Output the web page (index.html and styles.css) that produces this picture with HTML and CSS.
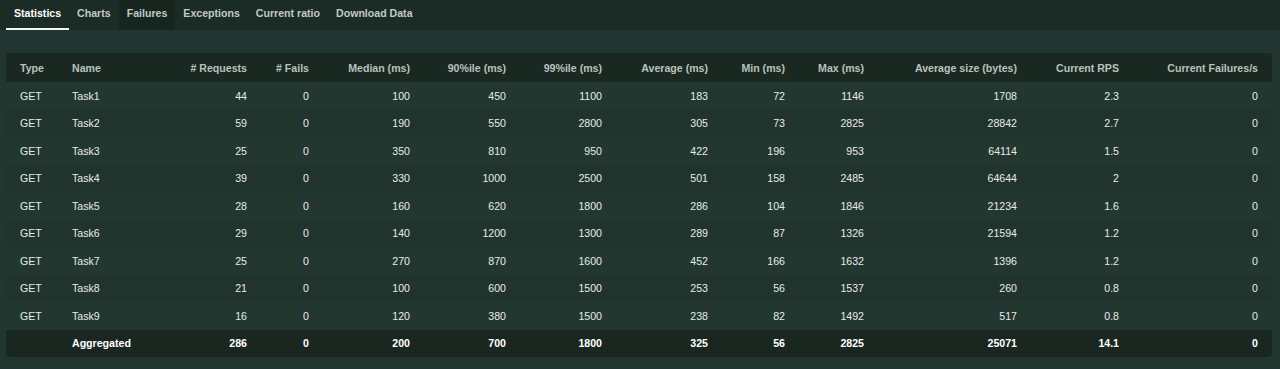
FILE: index.html
```html
<!DOCTYPE html>
<html>
<head>
<meta charset="utf-8">
<link rel="stylesheet" href="styles.css">
</head>
<body>
<nav class="tabs">
  <div class="tab active">Statistics</div>
  <div class="tab">Charts</div>
  <div class="tab hover">Failures</div>
  <div class="tab">Exceptions</div>
  <div class="tab">Current ratio</div>
  <div class="tab">Download Data</div>
</nav>
<main class="content">
  <div class="paper">
    <table class="stats">
      <colgroup>
        <col class="c-type"><col class="c-name"><col class="c-req"><col class="c-fails"><col class="c-med"><col class="c-p90"><col class="c-p99"><col class="c-avg"><col class="c-min"><col class="c-max"><col class="c-size"><col class="c-rps"><col class="c-fps">
      </colgroup>
      <thead>
        <tr><th class="l">Type</th><th class="l">Name</th><th># Requests</th><th># Fails</th><th>Median (ms)</th><th>90%ile (ms)</th><th>99%ile (ms)</th><th>Average (ms)</th><th>Min (ms)</th><th>Max (ms)</th><th>Average size (bytes)</th><th>Current RPS</th><th>Current Failures/s</th></tr>
      </thead>
      <tbody>
        <tr><td class="l">GET</td><td class="l">Task1</td><td>44</td><td>0</td><td>100</td><td>450</td><td>1100</td><td>183</td><td>72</td><td>1146</td><td>1708</td><td>2.3</td><td>0</td></tr>
        <tr><td class="l">GET</td><td class="l">Task2</td><td>59</td><td>0</td><td>190</td><td>550</td><td>2800</td><td>305</td><td>73</td><td>2825</td><td>28842</td><td>2.7</td><td>0</td></tr>
        <tr><td class="l">GET</td><td class="l">Task3</td><td>25</td><td>0</td><td>350</td><td>810</td><td>950</td><td>422</td><td>196</td><td>953</td><td>64114</td><td>1.5</td><td>0</td></tr>
        <tr><td class="l">GET</td><td class="l">Task4</td><td>39</td><td>0</td><td>330</td><td>1000</td><td>2500</td><td>501</td><td>158</td><td>2485</td><td>64644</td><td>2</td><td>0</td></tr>
        <tr><td class="l">GET</td><td class="l">Task5</td><td>28</td><td>0</td><td>160</td><td>620</td><td>1800</td><td>286</td><td>104</td><td>1846</td><td>21234</td><td>1.6</td><td>0</td></tr>
        <tr><td class="l">GET</td><td class="l">Task6</td><td>29</td><td>0</td><td>140</td><td>1200</td><td>1300</td><td>289</td><td>87</td><td>1326</td><td>21594</td><td>1.2</td><td>0</td></tr>
        <tr><td class="l">GET</td><td class="l">Task7</td><td>25</td><td>0</td><td>270</td><td>870</td><td>1600</td><td>452</td><td>166</td><td>1632</td><td>1396</td><td>1.2</td><td>0</td></tr>
        <tr><td class="l">GET</td><td class="l">Task8</td><td>21</td><td>0</td><td>100</td><td>600</td><td>1500</td><td>253</td><td>56</td><td>1537</td><td>260</td><td>0.8</td><td>0</td></tr>
        <tr><td class="l">GET</td><td class="l">Task9</td><td>16</td><td>0</td><td>120</td><td>380</td><td>1500</td><td>238</td><td>82</td><td>1492</td><td>517</td><td>0.8</td><td>0</td></tr>
        <tr class="agg"><td class="l"></td><td class="l">Aggregated</td><td>286</td><td>0</td><td>200</td><td>700</td><td>1800</td><td>325</td><td>56</td><td>2825</td><td>25071</td><td>14.1</td><td>0</td></tr>
      </tbody>
    </table>
  </div>
</main>
</body>
</html>
```

FILE: styles.css
```css
html, body {
  margin: 0;
  padding: 0;
}
body {
  background: #213630;
  font-family: "Liberation Sans", Arial, Helvetica, sans-serif;
  font-size: 10.6px;
  color: #e8eae9;
  height: 369px;
  overflow: hidden;
}
.tabs {
  display: flex;
  height: 30px;
  padding-left: 6px;
  background: #1b2b25;
}
.tab {
  box-sizing: border-box;
  height: 30px;
  padding: 7px 8px 0;
  line-height: 12px;
  font-weight: bold;
  color: #c2cac6;
  border-bottom: 2px solid transparent;
}
.tab.active {
  color: #ffffff;
  border-bottom-color: #f4f6f5;
}
.tab.hover {
  background: #17251f;
}
.content {
  padding: 23px 8px 0 6px;
}
.paper {
  border-radius: 4px;
  overflow: hidden;
  background: #20342d;
}
.stats {
  width: 100%;
  border-collapse: collapse;
  table-layout: fixed;
}
.c-type { width: 52px; }
.c-name { width: 100px; }
.c-req { width: 103px; }
.c-fails { width: 62px; }
.c-med { width: 101px; }
.c-p90 { width: 96px; }
.c-p99 { width: 96px; }
.c-avg { width: 106px; }
.c-min { width: 77px; }
.c-max { width: 79px; }
.c-size { width: 153px; }
.c-rps { width: 102px; }
.c-fps { width: 139px; }
.stats th, .stats td {
  padding: 0 14px;
  text-align: right;
  white-space: nowrap;
  line-height: 12px;
}
.stats th.l, .stats td.l {
  text-align: left;
}
.stats thead tr {
  background: #1a2822;
  height: 29px;
}
.stats th {
  font-weight: bold;
  color: #b8c2bd;
}
.stats tbody tr {
  height: 27.5px;
}
.stats tbody tr:nth-child(odd) {
  background: #223730;
}
.stats tbody tr:nth-child(even) {
  background: #20342d;
}
.stats tbody tr.agg {
  background: #1a2721;
}
.stats tr.agg td {
  font-weight: bold;
  color: #ffffff;
}
```
